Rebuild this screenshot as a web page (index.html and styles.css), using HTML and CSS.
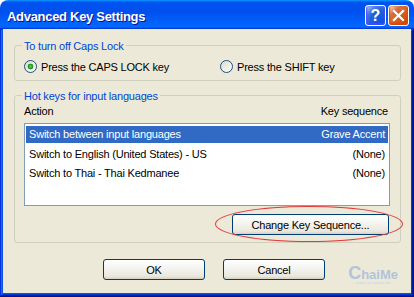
FILE: index.html
```html
<!DOCTYPE html>
<html lang="en">
<head>
    <meta charset="UTF-8">
    <title>Advanced Key Settings</title>
    <link rel="stylesheet" href="styles.css">
</head>
<body>
    <div class="window">
        <div class="titlebar">
            <span class="title">Advanced Key Settings</span>
            <div class="caption">
                <button class="cap help">?</button>
                <button class="cap close">
                    <svg width="13" height="13" viewBox="0 0 13 13"><path d="M2 2 L11 11 M11 2 L2 11" stroke="#fff" stroke-width="2.2" stroke-linecap="square"/></svg>
                </button>
            </div>
        </div>
        <div class="frame">
            <div class="client">
                <fieldset class="group caps">
                    <legend>To turn off Caps Lock</legend>
                    <div class="radios">
                        <label class="radio"><span class="dot checked"></span>Press the CAPS LOCK key</label>
                        <label class="radio"><span class="dot"></span>Press the SHIFT key</label>
                    </div>
                </fieldset>

                <fieldset class="group hotkeys">
                    <legend>Hot keys for input languages</legend>
                    <div class="cols">
                        <span>Action</span>
                        <span>Key sequence</span>
                    </div>
                    <div class="list">
                        <div class="row selected"><span>Switch between input languages</span><span>Grave Accent</span></div>
                        <div class="row"><span>Switch to English (United States) - US</span><span>(None)</span></div>
                        <div class="row"><span>Switch to Thai - Thai Kedmanee</span><span>(None)</span></div>
                    </div>
                    <div class="change-row">
                        <div class="change-wrap">
                            <button class="btn change">Change Key Sequence...</button>
                            <span class="mark"></span>
                        </div>
                    </div>
                </fieldset>

                <div class="actions">
                    <button class="btn">OK</button>
                    <button class="btn">Cancel</button>
                </div>

                <div class="watermark">
                    <span class="logo"><span class="big">C</span>haiMe</span>
                    <span class="tag">chaime.com computer tips</span>
                </div>
            </div>
        </div>
    </div>
</body>
</html>
```

FILE: styles.css
```css
*{
    margin: 0;
    padding: 0;
    box-sizing: border-box;
}
body{
    background: #fff;
    font-family: 'Liberation Sans', Arial, sans-serif;
    font-size: 11px;
    color: #000;
}
.window{
    width: 414px;
    height: 297px;
    display: flex;
    flex-direction: column;
}
.titlebar{
    height: 29px;
    flex: none;
    display: flex;
    justify-content: space-between;
    align-items: flex-start;
    padding: 0 5px 0 7px;
    border-radius: 8px 8px 0 0;
    background: linear-gradient(180deg, #0997ff, #0053ee 8%, #0050ee 40%, #06f 88%, #06f 93%, #005bff 95%, #003dd7 96%, #003dd7);
}
.titlebar .title{
    margin-top: 9px;
    line-height: 16px;
    font-size: 13px;
    font-weight: bold;
    letter-spacing: -0.3px;
    color: #fff;
    text-shadow: 1px 1px #0f1089;
}
.caption{
    display: flex;
    gap: 2px;
    margin-top: 5px;
}
.cap{
    width: 21px;
    height: 21px;
    border: 1px solid #fff;
    border-radius: 3px;
    display: flex;
    justify-content: center;
    align-items: center;
    color: #fff;
    font-family: 'Liberation Sans', Arial, sans-serif;
    font-weight: bold;
    font-size: 16px;
}
.cap.help{
    background: radial-gradient(circle at 90% 90%, #0054e9 0, #2263d5 55%, #4479e4 70%, #a3bbec 90%, #fff 100%);
    box-shadow: inset 0 -1px 2px 1px #4646ff;
}
.cap.close{
    background: radial-gradient(circle at 90% 90%, #cc4600 0, #dc6527 55%, #cd7546 70%, #ffccb2 90%, #fff 100%);
    box-shadow: inset 0 -1px 2px 1px #da4600;
}

.frame{
    flex: 1;
    display: flex;
    padding: 0 3px 4px;
    background: #0855dd;
    box-shadow: inset -1px -1px #00138c, inset 1px 1px #0831d9, inset -2px -2px #001ea0, inset 2px 2px #166aee, inset -3px -3px #003bda, inset 3px 3px #0855dd;
}
.client{
    flex: 1;
    position: relative;
    background: #ece9d8;
    padding: 8px 10px 0 11px;
    letter-spacing: -0.2px;
}

/* group boxes */
.group{
    border: 1px solid #d0d0bf;
    border-radius: 3px;
    padding: 6px 10px 6px 9px;
}
.group legend{
    color: #0046d5;
    line-height: 13px;
    padding: 3px 2px 0;
    margin-left: -2px;
}
.group.hotkeys{
    margin-top: 6px;
    padding: 2px 10px 7px 9px;
}

.radios{
    display: grid;
    grid-template-columns: 196px 1fr;
    height: 15px;
}
.radio{
    display: flex;
    align-items: center;
    gap: 4px;
}
.dot{
    width: 13px;
    height: 13px;
    border-radius: 50%;
    border: 1px solid #1c5180;
    background: linear-gradient(135deg, #dcd9cd, #fff);
}
.dot.checked{
    background: radial-gradient(circle, #5fd35a 0, #21a121 2px, #1b8e1b 2.6px, transparent 3.2px), linear-gradient(135deg, #dcd9cd, #fff);
}

.cols{
    display: flex;
    justify-content: space-between;
    line-height: 13px;
    padding-right: 2px;
}
.list{
    margin-top: 5px;
    height: 83px;
    border: 1px solid #7f9db9;
    background: #fff;
    padding: 2px 1px;
    display: flex;
    flex-direction: column;
    gap: 2.5px;
}
.row{
    height: 17px;
    line-height: 17px;
    display: flex;
    justify-content: space-between;
    padding: 0 3px;
}
.row.selected{
    background: #316ac5;
    color: #fff;
}

.change-row{
    display: flex;
    justify-content: flex-end;
    margin-top: 8px;
    padding-right: 1px;
}
.change-wrap{
    position: relative;
}
.btn{
    height: 21px;
    width: 102px;
    border: 1px solid #003c74;
    border-radius: 3px;
    background: linear-gradient(180deg, #fff, #f3f3ef 45%, #ebe8dc 85%, #d6d0c5);
    font-family: 'Liberation Sans', Arial, sans-serif;
    font-size: 11px;
    letter-spacing: -0.2px;
    color: #000;
}
.btn.change{
    width: 157px;
}
.mark{
    position: absolute;
    top: -8px;
    right: -14px;
    bottom: -7px;
    left: -17px;
    border: 1px solid #e03a3a;
    border-radius: 50%;
    box-shadow: 0 0 1px #f29a9a;
}

.actions{
    display: flex;
    gap: 18px;
    margin-top: 16px;
    padding-left: 89px;
}

.watermark{
    position: absolute;
    right: 13px;
    bottom: 8px;
    display: flex;
    flex-direction: column;
    align-items: center;
    color: #b1c4da;
    letter-spacing: 0;
}
.watermark .logo{
    font-size: 13px;
    font-weight: bold;
    line-height: 13px;
}
.watermark .big{
    font-size: 18px;
}
.watermark .tag{
    font-size: 3px;
    line-height: 4px;
    color: #c5d2e0;
}
```
